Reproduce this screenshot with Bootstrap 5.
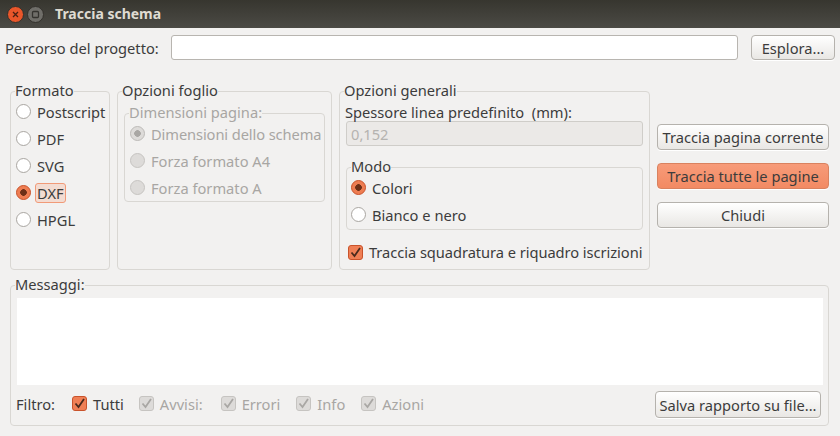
<!DOCTYPE html>
<html lang="it">
<head>
    <meta charset="UTF-8">
    <title>Traccia schema</title>
    <link href="https://cdn.jsdelivr.net/npm/bootstrap@5.3.3/dist/css/bootstrap.min.css" rel="stylesheet">
    <script src="https://cdn.jsdelivr.net/npm/bootstrap@5.3.3/dist/js/bootstrap.bundle.min.js"></script>
    <style>
        html, body { height: 436px; overflow: hidden; }
        body { background: #f2f1f0; color: #3c3c3c; font: 14.67px/18px "Noto Sans", sans-serif; }
        label { white-space: nowrap; }

        .title-bar { height: 28px; padding-left: 7px; background: linear-gradient(#37362f, #4b4a45); color: #dfdbd2; font-weight: 700; font-size: 14px; }
        .win-btn { width: 17px; height: 17px; margin-right: 3px; display: block; }
        .title-bar span { margin-left: 8px; }

        .path-row { height: 25px; margin: 7px 5px 0 5px; }
        .path-label { width: 166px; }
        .path-input { width: 567px; height: 25px; padding: 0 6px; border: 1px solid #b8b5b0; border-radius: 3px; box-shadow: none; margin-right: 13px; }

        .gtk-btn { height: 26px; padding: 0; border: 1px solid #b5b2ad; border-radius: 4px; background: linear-gradient(#ffffff, #e9e7e4); color: #3c3c3c; font-size: 14.67px; line-height: 18px; box-shadow: 0 1px 0 #fff; }
        .gtk-btn:hover { color: #3c3c3c; border-color: #b5b2ad; }
        .gtk-btn.active-btn { background: linear-gradient(#f79b79, #f28a63); border-color: #d9825f; }
        .browse-btn { width: 84px; height: 25px; }
        .side-col { width: 172px; margin-top: 41px; gap: 13px; }
        .save-btn { width: 166px; height: 27px; }

        .opts-row { margin: 23px 0 0 10px; gap: 7px; height: 187px; }
        .grp { min-width: 0; margin: 0; padding: 0 6px; border: 1px solid #d9d7d3; border-radius: 4px; }
        .grp legend { float: none; width: auto; margin: 0 0 0 -2px; padding: 0 0 2px; font-size: 14.67px; line-height: 14px; }
        .grp-format { width: 100px; padding: 0 0 0 5px; }
        .grp-format legend { margin-left: -1px; }
        .grp-format .opt-row:first-of-type { margin-top: -1px; }
        .grp-sheet { width: 215px; }
        .grp-general { width: 311px; }
        .grp-inner { margin-top: 6px; height: 97px; padding: 0 5px; }
        .grp-inner legend { margin-left: -1px; }
        .grp-inner .opt-row:first-of-type { margin-top: -1px; }
        .grp-mode { margin-top: 13px; height: 71px; padding: 0 4px; }
        .grp-mode legend { margin-left: 0; }
        .grp-mode .opt-row:first-of-type { margin-top: -1px; }
        .grp-msg { width: 819px; height: 149px; margin: 7px 0 0 10px; }
        .muted-txt, .muted-txt legend { color: #a8a6a3; }

        .opt-row { height: 27px; }
        .opt-row .form-check-input { margin: 0 6px 0 0; flex: none; }
        .form-check-input { width: 15px; height: 15px; border: 1px solid #a9a6a1; background-color: #fff; box-shadow: none; }
        .form-check-input:disabled { opacity: 1; background-color: #dddbd9; border-color: #c6c4c1; }
        .form-check-input[type=radio]:checked { border-color: #c9532b; background-color: #ee7d52; background-image: radial-gradient(circle, #6d2f17 0 3px, transparent 3.6px); background-size: auto; }
        .form-check-input[type=radio]:checked:disabled { border-color: #bdbbb8; background-color: #dddbd9; background-image: radial-gradient(circle, #a9a7a4 0 3px, transparent 3.6px); }
        .form-check-input[type=checkbox] { border-radius: 3px; background-size: 15px; }
        .form-check-input[type=checkbox]:checked { border-color: #c9532b; background-color: #ef7f55; background-image: url("data:image/svg+xml,%3Csvg xmlns='http://www.w3.org/2000/svg' viewBox='0 0 15 15'%3E%3Cpath d='M3.5 7.5l3 3.5 5.5-8' fill='none' stroke='%234a2a1c' stroke-width='1.8'/%3E%3C/svg%3E"); }
        .form-check-input[type=checkbox]:checked:disabled { border-color: #c6c4c1; background-color: #dddbd9; background-image: url("data:image/svg+xml,%3Csvg xmlns='http://www.w3.org/2000/svg' viewBox='0 0 15 15'%3E%3Cpath d='M3.5 7.5l3 3.5 5.5-8' fill='none' stroke='%23a9a7a4' stroke-width='1.8'/%3E%3C/svg%3E"); }
        .dxf-focus { padding: 0 1px; margin-left: -2px; border: 1px solid #f19a78; border-radius: 3px; background: #f3dcd2; line-height: 18px; }
        .size-label { letter-spacing: -0.1px; }

        .opt-disabled { color: #a8a6a3; }
        .thick-label { margin: 4px 0 0 -1px; height: 18px; }
        .thick-input { height: 25px; margin: 0; padding: 0 4px; border: 1px solid #cfcdc9; border-radius: 3px; background: #ebe9e7; color: #b5b3b0; font-size: 14.67px; box-shadow: none; }
        .thick-input:disabled { background: #ebe9e7; }
        .frame-row { height: 18px; margin: 13px 0 0 2px; }
        .frame-row .form-check-input { margin: 0 6px 0 0; flex: none; }
        .frame-row label { letter-spacing: -0.05px; }

        .msg-box { height: 87px; margin: 5px 0 6px 0; background: #fff; width: 806px; }
        .filter-row { width: 804px; }
        .filter-row .form-check-input { margin: 0 6px 2px 0; }
        .filter-row label, .filter-label { margin-bottom: 2px; }
        .filter-label { margin: 0 17px 2px -1px; }
        .filter-gap { margin-right: 16px; }
        .filter-gap-first { margin-right: 15px; }
        .filter-gap-wide { margin-right: 18px; }
    </style>
</head>

<body>
    <!-- Title bar -->
    <div class="title-bar d-flex align-items-center">
        <svg class="win-btn" viewBox="0 0 17 17">
            <circle cx="8.5" cy="8.5" r="8" fill="#e9562a" stroke="#33312c"/>
            <path d="M6 6l5 5M11 6l-5 5" stroke="#4a2012" stroke-width="1.3"/>
        </svg>
        <svg class="win-btn" viewBox="0 0 17 17">
            <circle cx="8.5" cy="8.5" r="8" fill="#6f6e69" stroke="#33312c"/>
            <rect x="5.5" y="5.5" width="6" height="6" rx="1" fill="none" stroke="#34332f" stroke-width="1.3"/>
        </svg>
        <span>Traccia schema</span>
    </div>

    <!-- Project path -->
    <div class="path-row d-flex align-items-center">
        <label class="path-label">Percorso del progetto:</label>
        <input class="form-control path-input" type="text">
        <button class="btn gtk-btn browse-btn" type="button">Esplora...</button>
    </div>

    <!-- Options -->
    <div class="opts-row d-flex">
        <fieldset class="grp grp-format">
            <legend>Formato</legend>
            <div class="opt-row d-flex align-items-center"><input class="form-check-input" type="radio" name="fmt"><label>Postscript</label></div>
            <div class="opt-row d-flex align-items-center"><input class="form-check-input" type="radio" name="fmt"><label>PDF</label></div>
            <div class="opt-row d-flex align-items-center"><input class="form-check-input" type="radio" name="fmt"><label>SVG</label></div>
            <div class="opt-row d-flex align-items-center"><input class="form-check-input" type="radio" name="fmt" checked><label class="dxf-focus">DXF</label></div>
            <div class="opt-row d-flex align-items-center"><input class="form-check-input" type="radio" name="fmt"><label>HPGL</label></div>
        </fieldset>

        <fieldset class="grp grp-sheet">
            <legend>Opzioni foglio</legend>
            <fieldset class="grp grp-inner muted-txt">
                <legend>Dimensioni pagina:</legend>
                <div class="opt-row d-flex align-items-center"><input class="form-check-input" type="radio" name="size" checked disabled><label class="size-label">Dimensioni dello schema</label></div>
                <div class="opt-row d-flex align-items-center"><input class="form-check-input" type="radio" name="size" disabled><label>Forza formato A4</label></div>
                <div class="opt-row d-flex align-items-center"><input class="form-check-input" type="radio" name="size" disabled><label>Forza formato A</label></div>
            </fieldset>
        </fieldset>

        <fieldset class="grp grp-general">
            <legend>Opzioni generali</legend>
            <div class="thick-label">Spessore linea predefinito &nbsp;(mm):</div>
            <input class="form-control thick-input" type="text" value="0,152" disabled>
            <fieldset class="grp grp-mode">
                <legend>Modo</legend>
                <div class="opt-row d-flex align-items-center"><input class="form-check-input" type="radio" name="mode" checked><label>Colori</label></div>
                <div class="opt-row d-flex align-items-center"><input class="form-check-input" type="radio" name="mode"><label>Bianco e nero</label></div>
            </fieldset>
            <div class="frame-row d-flex align-items-center"><input class="form-check-input" type="checkbox" checked><label>Traccia squadratura e riquadro iscrizioni</label></div>
        </fieldset>

        <div class="side-col d-flex flex-column">
            <button class="btn gtk-btn" type="button">Traccia pagina corrente</button>
            <button class="btn gtk-btn active-btn" type="button">Traccia tutte le pagine</button>
            <button class="btn gtk-btn" type="button">Chiudi</button>
        </div>
    </div>

    <!-- Messages -->
    <fieldset class="grp grp-msg">
        <legend>Messaggi:</legend>
        <div class="msg-box"></div>
        <div class="filter-row d-flex align-items-center">
            <span class="filter-label">Filtro:</span>
            <input class="form-check-input" type="checkbox" checked><label class="filter-gap-first">Tutti</label>
            <input class="form-check-input" type="checkbox" checked disabled><label class="filter-gap-wide opt-disabled">Avvisi:</label>
            <input class="form-check-input" type="checkbox" checked disabled><label class="filter-gap opt-disabled">Errori</label>
            <input class="form-check-input" type="checkbox" checked disabled><label class="filter-gap opt-disabled">Info</label>
            <input class="form-check-input" type="checkbox" checked disabled><label class="opt-disabled">Azioni</label>
            <button class="btn gtk-btn save-btn ms-auto" type="button">Salva rapporto su file...</button>
        </div>
    </fieldset>
</body>

</html>
